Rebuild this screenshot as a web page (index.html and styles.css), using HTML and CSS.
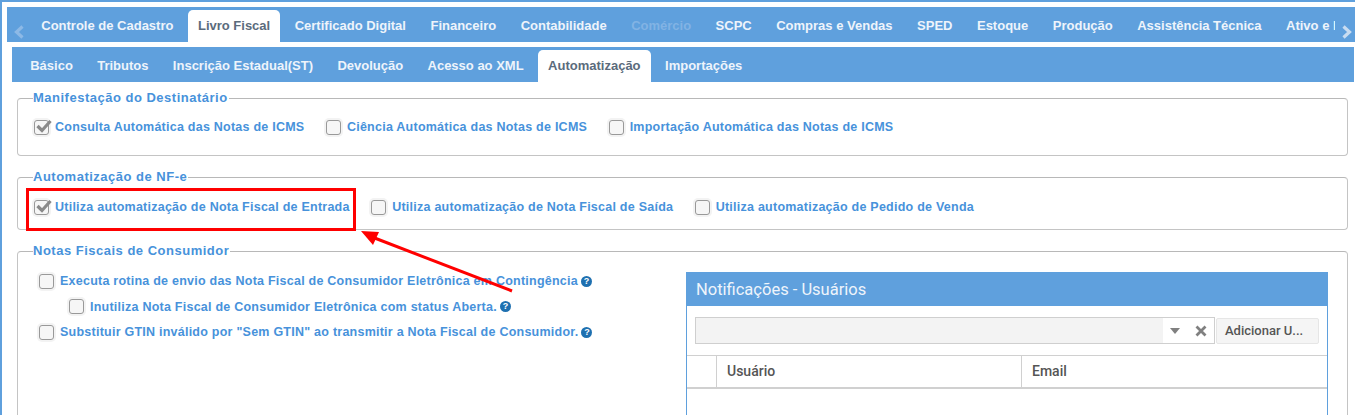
FILE: index.html
```html
<!DOCTYPE html>
<html lang="pt-BR">
<head>
<meta charset="utf-8">
<title>Livro Fiscal</title>
<link rel="stylesheet" href="styles.css">
</head>
<body>
<div class="frame">
  <nav class="main-tabs">
    <svg class="arrow-nav" width="12" height="14" viewBox="0 0 12 14"><path d="M9.5 1.5L3.5 7l6 5.5" fill="none" stroke="#8db9e6" stroke-width="3.2"/></svg>
    <div class="main-list">
      <span class="mt">Controle de Cadastro</span>
      <span class="mt active">Livro Fiscal</span>
      <span class="mt">Certificado Digital</span>
      <span class="mt">Financeiro</span>
      <span class="mt">Contabilidade</span>
      <span class="mt disabled">Comércio</span>
      <span class="mt">SCPC</span>
      <span class="mt">Compras e Vendas</span>
      <span class="mt">SPED</span>
      <span class="mt">Estoque</span>
      <span class="mt">Produção</span>
      <span class="mt">Assistência Técnica</span>
      <span class="mt">Ativo e Patrimônio</span>
    </div>
    <svg class="arrow-nav right" width="12" height="14" viewBox="0 0 12 14"><path d="M2.5 1.5L8.5 7l-6 5.5" fill="none" stroke="#c8dcf1" stroke-width="3.2"/></svg>
  </nav>
  <nav class="sub-tabs">
    <span class="st">Básico</span>
    <span class="st">Tributos</span>
    <span class="st">Inscrição Estadual(ST)</span>
    <span class="st">Devolução</span>
    <span class="st">Acesso ao XML</span>
    <span class="st active">Automatização</span>
    <span class="st">Importações</span>
  </nav>
  <section class="group g1">
    <h3 class="legend">Manifestação do Destinatário</h3>
    <div class="row">
      <label class="check"><span class="box on"><svg width="20" height="16" viewBox="0 0 20 16"><path d="M4.5 8L9 12.5 17.5 3" fill="none" stroke="#8a8a8a" stroke-width="3.2"/></svg></span>Consulta Automática das Notas de ICMS</label>
      <label class="check"><span class="box"></span>Ciência Automática das Notas de ICMS</label>
      <label class="check"><span class="box"></span>Importação Automática das Notas de ICMS</label>
    </div>
  </section>
  <section class="group g2">
    <h3 class="legend">Automatização de NF-e</h3>
    <div class="row">
      <label class="check"><span class="box on"><svg width="20" height="16" viewBox="0 0 20 16"><path d="M4.5 8L9 12.5 17.5 3" fill="none" stroke="#8a8a8a" stroke-width="3.2"/></svg></span>Utiliza automatização de Nota Fiscal de Entrada</label>
      <label class="check"><span class="box"></span>Utiliza automatização de Nota Fiscal de Saída</label>
      <label class="check"><span class="box"></span>Utiliza automatização de Pedido de Venda</label>
    </div>
  </section>
  <section class="group g3">
    <h3 class="legend">Notas Fiscais de Consumidor</h3>
    <div class="columns">
      <div class="opts">
        <label class="check"><span class="box"></span>Executa rotina de envio das Nota Fiscal de Consumidor Eletrônica em Contingência<span class="help">?</span></label>
        <label class="check indent"><span class="box"></span>Inutiliza Nota Fiscal de Consumidor Eletrônica com status Aberta.<span class="help">?</span></label>
        <label class="check"><span class="box"></span>Substituir GTIN inválido por "Sem GTIN" ao transmitir a Nota Fiscal de Consumidor.<span class="help">?</span></label>
      </div>
      <div class="panel">
        <div class="panel-title">Notificações - Usuários</div>
        <div class="toolbar">
          <div class="combo">
            <div class="combo-field"></div>
            <div class="combo-icons">
              <span class="caret"></span>
              <svg width="12" height="12" viewBox="0 0 12 12"><path d="M1.5 1.5l9 9M10.5 1.5l-9 9" stroke="#808080" stroke-width="2.8"/></svg>
            </div>
          </div>
          <div class="add-btn">Adicionar U...</div>
        </div>
        <div class="thead">
          <div class="th th-sel"></div>
          <div class="th th-user">Usuário</div>
          <div class="th th-mail">Email</div>
        </div>
      </div>
    </div>
  </section>
</div>
<div class="highlight"></div>
<svg class="pointer" width="170" height="80" viewBox="0 0 170 80"><path d="M154 62L14 8" stroke="#f00" stroke-width="3" fill="none"/><path d="M3 2l18 1-6 13z" fill="#f00"/></svg>
</body>
</html>
```
FILE: styles.css
```css
html, body { margin: 0; padding: 0; background: #fff; }
body { width: 1355px; height: 415px; overflow: hidden; position: relative; font-family: "Liberation Sans", Arial, sans-serif; }
.frame { box-sizing: border-box; height: 415px; border-top: 2px solid #5fa0dd; border-left: 2px solid #5fa0dd; padding: 5px 0 0 5px; overflow: hidden; }

.main-tabs { display: flex; align-items: flex-end; height: 35px; background: #5fa0dd; position: relative; overflow: hidden; }
.arrow-nav { position: absolute; left: 6px; top: 18px; }
.arrow-nav.right { left: auto; right: 2px; }
.main-list { display: flex; flex: none; width: 1306px; overflow: hidden; margin-left: 22px; align-items: flex-end; white-space: nowrap; }
.mt { height: 32px; line-height: 32px; padding: 0 12.25px; font-size: 13px; font-weight: bold; color: #eef4fb; flex: none; }
.mt.active { background: #fff; color: #5b6b7c; border-radius: 5px 5px 0 0; padding: 0 10px; margin: 0 2.25px; }
.mt.disabled { color: #82b3e4; }

.sub-tabs { display: flex; align-items: flex-end; height: 35px; margin: 5px 1px 0 5px; background: #5fa0dd; }
.st { height: 32px; line-height: 32px; padding: 0 12.2px; font-size: 13px; font-weight: bold; color: #eef4fb; }
.st:first-child { margin-left: 6px; }
.st.active { background: #fff; color: #5b6b7c; border-radius: 5px 5px 0 0; padding: 0 10.5px; margin: 0 1.8px; }

.group { position: relative; box-sizing: border-box; margin: 0 0 0 10px; width: 1331px; border: 1px solid #c4c4c4; border-top-color: #b8b8b8; border-radius: 4px; }
.g1 { margin-top: 16px; height: 58px; }
.g2 { margin-top: 21px; height: 53px; }
.g3 { margin-top: 21px; height: 200px; }
.legend { position: absolute; left: 15px; top: -9px; margin: 0; padding: 0 1px 0 0; background: #fff; font-size: 13px; line-height: 16px; font-weight: bold; letter-spacing: .5px; color: #4792db; }
.row { display: flex; align-items: center; gap: 21.5px; padding: 19px 0 0 16px; }
.g2 .row { padding-top: 20px; }

.check { display: flex; align-items: center; font-size: 12.5px; line-height: 18px; font-weight: bold; letter-spacing: .24px; color: #4792db; white-space: nowrap; }
.box { box-sizing: border-box; flex: none; width: 15px; height: 15px; margin-right: 6px; border: 1.5px solid #999; border-radius: 3px; background: #f6f6f6; position: relative; box-shadow: 0 0 0 2px #f3f3f3; }
.box svg { position: absolute; left: -2px; top: -3px; }
.help { display: inline-block; width: 11px; height: 11px; margin-left: 3px; border-radius: 50%; background: #1e70b0; color: #fff; font-size: 9px; line-height: 11px; letter-spacing: 0; text-align: center; }

.columns { display: flex; justify-content: space-between; }
.opts { padding: 20px 0 0 21px; display: flex; flex-direction: column; gap: 7.5px; }
.indent { margin-left: 30px; }
.panel { box-sizing: border-box; width: 642px; height: 180px; margin: 20px 19px 0 0; border: 1px solid #5fa0dd; font-family: Roboto, "Liberation Sans", sans-serif; }
.panel-title { height: 34px; margin: -1px -1px 0; background: #5fa0dd; color: #eef4fb; font-size: 16.5px; line-height: 36px; padding-left: 10px; }
.toolbar { display: flex; align-items: center; height: 49px; padding: 0 8px; border-bottom: 1px solid #d0d0d0; }
.combo { flex: 1; display: flex; height: 27px; box-sizing: border-box; border: 1px solid #cfcfcf; margin-right: 1px; }
.combo-field { flex: 1; background: #f3f3f3; }
.combo-icons { display: flex; align-items: center; gap: 15px; padding: 0 7px; width: 51px; box-sizing: border-box; }
.caret { width: 0; height: 0; border: 5px solid transparent; border-top: 6px solid #808080; border-bottom: 0; }
.add-btn { box-sizing: border-box; flex: none; width: 103px; height: 26px; line-height: 24px; padding-left: 8px; background: #f5f5f5; border: 1px solid #e6e6e6; border-radius: 2px; font-size: 13px; font-weight: 500; color: #555; white-space: nowrap; }
.thead { display: flex; height: 31px; border-bottom: 2px solid #d0d0d0; }
.th { box-sizing: border-box; font-size: 14px; font-weight: 500; line-height: 31px; color: #555; padding-left: 10px; border-right: 1px solid #d0d0d0; }
.th-sel { width: 30px; }
.th-user { width: 305px; }
.th-mail { flex: 1; border-right: 0; }

.highlight { position: absolute; left: 26px; top: 188px; box-sizing: border-box; width: 330px; height: 43px; border: 3px solid #f00; }
.pointer { position: absolute; left: 358px; top: 229px; }
```
